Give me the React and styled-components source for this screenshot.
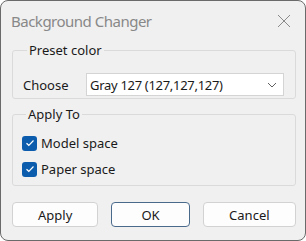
import React from "react";
import styled, { createGlobalStyle } from "styled-components";

const Global = createGlobalStyle`
  html, body { margin: 0; padding: 0; background: #ffffff; }
  body { font-family: "Noto Sans", "Segoe UI", sans-serif; }
  #root { width: 306px; height: 241px; }
`;

const Window = styled.div`
  box-sizing: border-box;
  width: 306px;
  height: 241px;
  background: #f0f0f0;
  border: 1px solid #6a6a6a;
  border-radius: 8px;
  display: flex;
  flex-direction: column;
  overflow: hidden;
  color: #1a1a1a;
  font-size: 13px;
`;

const TitleBar = styled.div`
  height: 39px;
  flex: none;
  display: flex;
  align-items: center;
  justify-content: space-between;
  padding: 0 14px 0 10px;
`;

const Title = styled.div`
  font-size: 15px;
  letter-spacing: -0.5px;
  color: #888888;
  line-height: 20px;
`;

const CloseIcon = styled.svg`
  width: 14px;
  height: 14px;
  display: block;
`;

const Body = styled.div`
  display: flex;
  flex-direction: column;
  padding: 0 9px 0 11px;
`;

const Group = styled.fieldset`
  margin: ${(p) => p.$top}px 0 0 0;
  padding: ${(p) => p.$pad};
  border: 1px solid #dadada;
  border-radius: 3px;
  min-width: 0;
`;

const Legend = styled.legend`
  padding: 0 2px;
  margin-left: 4px;
  line-height: 18px;
  font-size: 13px;
`;

const Row = styled.div`
  display: flex;
  align-items: center;
`;

const Label = styled.span`
  width: 63px;
  flex: none;
`;

const Select = styled.div`
  box-sizing: border-box;
  width: 199px;
  height: 23px;
  background: #ffffff;
  border: 1px solid #d4d4d4;
  display: flex;
  align-items: center;
  justify-content: space-between;
  padding: 0 4px 0 3px;
`;

const SelectText = styled.span`
  letter-spacing: -0.3px;
`;

const Chevron = styled.svg`
  width: 10px;
  height: 6px;
  margin-right: 2px;
  display: block;
`;

const CheckRow = styled.label`
  display: flex;
  align-items: center;
  gap: 4px;
  height: 26px;
`;

const Box = styled.span`
  box-sizing: border-box;
  width: 15px;
  height: 15px;
  border-radius: 3px;
  background: #0b5cad;
  display: flex;
  align-items: center;
  justify-content: center;
`;

const Buttons = styled.div`
  display: flex;
  gap: 13px;
  margin-top: 16px;
`;

const Button = styled.button`
  box-sizing: border-box;
  width: ${(p) => p.$w}px;
  height: 25px;
  background: #fdfdfd;
  border: 1px solid ${(p) => (p.$primary ? "#4a6a8c" : "#d2d2d2")};
  border-radius: 4px;
  font-family: inherit;
  font-size: 13px;
  color: #1a1a1a;
  padding: 0;
`;

const Check = () => (
  <svg width="10" height="8" viewBox="0 0 10 8">
    <path d="M1.5 4.2 L3.8 6.3 L8.5 1.5" fill="none" stroke="#ffffff" strokeWidth="1.2" />
  </svg>
);

export default function App() {
  return (
    <>
      <Global />
      <Window>
        <TitleBar>
          <Title>Background Changer</Title>
          <CloseIcon viewBox="0 0 14 14">
            <path d="M1 1 L13 13 M13 1 L1 13" stroke="#8a8a8a" strokeWidth="1" fill="none" />
          </CloseIcon>
        </TitleBar>
        <Body>
          <Group $top={1} $pad="14px 11px 2px 10px">
            <Legend>Preset color</Legend>
            <Row>
              <Label>Choose</Label>
              <Select>
                <SelectText>Gray 127 (127,127,127)</SelectText>
                <Chevron viewBox="0 0 10 6">
                  <path d="M1 1 L5 5 L9 1" stroke="#606060" strokeWidth="1" fill="none" />
                </Chevron>
              </Select>
            </Row>
          </Group>
          <Group $top={6} $pad="7px 10px 3px 9px">
            <Legend>Apply To</Legend>
            <CheckRow>
              <Box><Check /></Box>
              Model space
            </CheckRow>
            <CheckRow>
              <Box><Check /></Box>
              Paper space
            </CheckRow>
          </Group>
          <Buttons>
            <Button $w={87}>Apply</Button>
            <Button $w={79} $primary>OK</Button>
            <Button $w={94}>Cancel</Button>
          </Buttons>
        </Body>
      </Window>
    </>
  );
}
